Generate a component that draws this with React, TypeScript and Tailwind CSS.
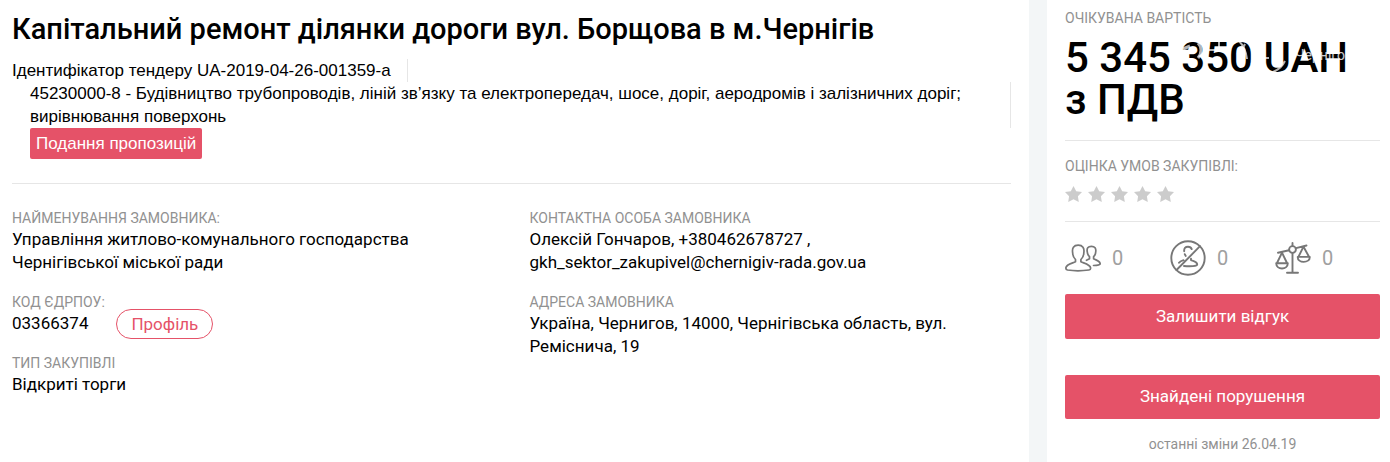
import type { ReactNode } from "react";

const roboto = "font-[Roboto,sans-serif]";

function Field({ label, children }: { label: string; children: ReactNode }) {
  return (
    <div>
      <dt className="text-sm leading-5 text-[#919191]">{label}</dt>
      <dd className="text-[17px] leading-[23px] text-black">{children}</dd>
    </div>
  );
}

function Star() {
  return (
    <svg viewBox="0 0 17 16" className="h-4 w-[17px] fill-[#cccccc]" aria-hidden="true">
      <path d="M8.500 0l2.700 5.200 5.800.9-4.100 4.100.9 5.800-5.300-2.700L3.200 16l.9-5.800L0 6.100l5.800-.9z" />
    </svg>
  );
}

function PeopleIcon() {
  return (
    <svg viewBox="0 0 36 28" className="h-7 w-9 fill-none stroke-[#777777]" strokeWidth="1.700" strokeLinecap="round" strokeLinejoin="round" aria-hidden="true">
      <path d="M10.500 15.500C8.500 13.500 7.700 11.500 7.700 9 6.800 3.800 8.700 1.200 13.200 1.200s6.400 2.600 5.600 7.800c0 2.500-.9 4.500-2.900 6.500v2.300c4 1.700 9.200 2.700 9.700 6 .2 1.600-.3 2-1.700 2.200-7 1-15 1-21.400 0C1.200 25.700.7 25.300.9 23.700c.5-3.200 5.700-4.200 9.600-5.900z" />
      <path d="M22.300 8C21.500 4.300 23 2.300 26.400 2.300S31.300 4.300 30.700 8c0 2-.7 3.400-2.100 4.700v2c2.600 1.600 6.400 1.900 6.600 5.200-.1 1.300-3.300 1.500-6.700 1.600M22.300 8c.1 2 .8 3.400 2.200 4.700v2l-3 1.600" />
    </svg>
  );
}

function NoPersonIcon() {
  return (
    <svg viewBox="0 0 36 36" className="size-9 fill-none stroke-[#777777]" strokeWidth="1.900" strokeLinecap="round" strokeLinejoin="round" aria-hidden="true">
      <circle cx="18" cy="18" r="16.700" />
      <path d="M6.500 30L30 6.200M14.200 11.200C13.900 8.300 15.300 6.800 18 6.800c1.800 0 3.200.7 3.700 2.300M14.800 14.200l.9 1.700M9 22.800c.9-1.400 2.700-2 4.500-2.600M21 18.800v1.300c2.700 1 6.200 1.500 6.200 4.400 0 1.800-7 2-13.200 1.500" />
    </svg>
  );
}

function ScalesIcon() {
  return (
    <svg viewBox="0 0 36 32" className="h-8 w-9 fill-none stroke-[#777777]" strokeWidth="1.900" strokeLinecap="round" strokeLinejoin="round" aria-hidden="true">
      <circle cx="17.500" cy="7.500" r="3.400" />
      <path d="M17.500 1v3M17.500 11v19.500M12 30.700h11M3 10.700l11-2.500M21 6.200l10.500-2.700M7 10.700L2 21M7 10.700L12 21M1.200 21.300h11.600c0 3.200-2.600 5.200-5.800 5.200s-5.800-2-5.800-5.200zM28.500 4.700l-5 10M28.500 4.700l5.500 10M22.700 14.900h12.100c0 3.200-2.800 5-6.100 5s-6-1.800-6-5z" />
    </svg>
  );
}

function Watermark() {
  return (
    <div className="absolute left-[118px] top-7 flex items-start" aria-hidden="true">
      <svg viewBox="0 0 110 36" className="h-9 w-[110px] fill-none stroke-white opacity-70" strokeWidth="3">
        <path d="M0 13l7-3M15 7c4 4 4 10 0 15M0 19l4-3" />
        <path d="M36 4v10M24 14h24M56 5c4 4 7 10 8 18M62 8l-4 8M82 22h4M90 36c5-2 9-5 12-11" strokeWidth="2" />
      </svg>
    </div>
  );
}

function Stat({ icon, label }: { icon: ReactNode; label: string }) {
  return (
    <li className="flex items-center gap-[11px] text-xl text-[#a0a0a0]" aria-label={label}>
      {icon}
      <span>0</span>
    </li>
  );
}

export default function App() {
  return (
    <div className={`flex items-stretch gap-[18px] bg-[#f3f6f7] text-black ${roboto}`}>
      <main className="min-w-0 flex-1 bg-white pb-16 pl-3 pr-[18px] pt-2">
        <h1 className="text-[29px] font-medium leading-[42px]">
          Капітальний ремонт ділянки дороги вул. Борщова в м.Чернігів
        </h1>
        <div className="flex flex-col items-start pb-6 pt-[9px] font-['Liberation_Sans',sans-serif] text-[17px] leading-[23px]">
          <p className="border-r border-[#e6e6e6] pr-4">Ідентифікатор тендеру UA-2019-04-26-001359-a</p>
          <p className="w-full border-r border-[#e6e6e6] px-[18px]">
            45230000-8 - Будівництво трубопроводів, ліній зв’язку та електропередач, шосе, доріг, аеродромів і залізничних доріг; вирівнювання поверхонь
          </p>
          <span className="ml-[18px] rounded-xs bg-[#e55268] px-1.5 py-1 text-white">Подання пропозицій</span>
        </div>
        <div className="grid grid-cols-2 gap-9 border-t border-[#e6e6e6] pt-6">
          <dl className="flex flex-col gap-[18px]">
            <Field label="НАЙМЕНУВАННЯ ЗАМОВНИКА:">
              <span className="block max-w-[420px]">Управління житлово-комунального господарства Чернігівської міської ради</span>
            </Field>
            <Field label="КОД ЄДРПОУ:">
              <span className="flex h-[23px] items-center gap-7">
                03366374
                <a href="#profile" className="rounded-full border border-[#e55268] px-[14px] py-[3px] leading-[22px] text-[#e55268]">Профіль</a>
              </span>
            </Field>
            <Field label="ТИП ЗАКУПІВЛІ">Відкриті торги</Field>
          </dl>
          <dl className="flex flex-col gap-[18px]">
            <Field label="КОНТАКТНА ОСОБА ЗАМОВНИКА">
              Олексій Гончаров, +380462678727 ,<br />
              gkh_sektor_zakupivel@chernigiv-rada.gov.ua
            </Field>
            <Field label="АДРЕСА ЗАМОВНИКА">
              <span className="block max-w-[430px]">Україна, Чернигов, 14000, Чернігівська область, вул. Реміснича, 19</span>
            </Field>
          </dl>
        </div>
      </main>
      <aside className="w-[343px] shrink-0 bg-white pb-2 pl-[18px] pr-[10px] pt-2">
        <section className="relative border-b border-[#e6e6e6] pb-[19px]">
          <h2 className="text-sm leading-5 text-[#919191]">ОЧІКУВАНА ВАРТІСТЬ</h2>
          <p className="pt-[9px] text-[42px] font-medium leading-[42px]">
            5 345 350 UAH<br />з ПДВ
          </p>
          <Watermark />
          <span className="absolute left-[230px] top-[37px] text-sm text-white/80" aria-hidden="true">Чернігов</span>
        </section>
        <section className="border-b border-[#e6e6e6] pb-[19px] pt-[15px]">
          <h2 className="text-sm leading-5 text-[#919191]">ОЦІНКА УМОВ ЗАКУПІВЛІ:</h2>
          <div className="flex gap-[6px] pt-[10px]" role="img" aria-label="0">
            <Star /><Star /><Star /><Star /><Star />
          </div>
        </section>
        <ul className="grid h-[72px] grid-cols-3 items-center">
          <Stat icon={<PeopleIcon />} label="0" />
          <Stat icon={<NoPersonIcon />} label="0" />
          <Stat icon={<ScalesIcon />} label="0" />
        </ul>
        <div className="flex flex-col gap-9">
          <button type="button" className="h-[45px] rounded-xs bg-[#e55268] text-[17px] text-white">Залишити відгук</button>
          <button type="button" className="h-11 rounded-xs bg-[#e55268] text-[17px] text-white">Знайдені порушення</button>
        </div>
        <p className="pt-[15px] text-center text-sm leading-5 text-[#919191]">останні зміни 26.04.19</p>
      </aside>
    </div>
  );
}
